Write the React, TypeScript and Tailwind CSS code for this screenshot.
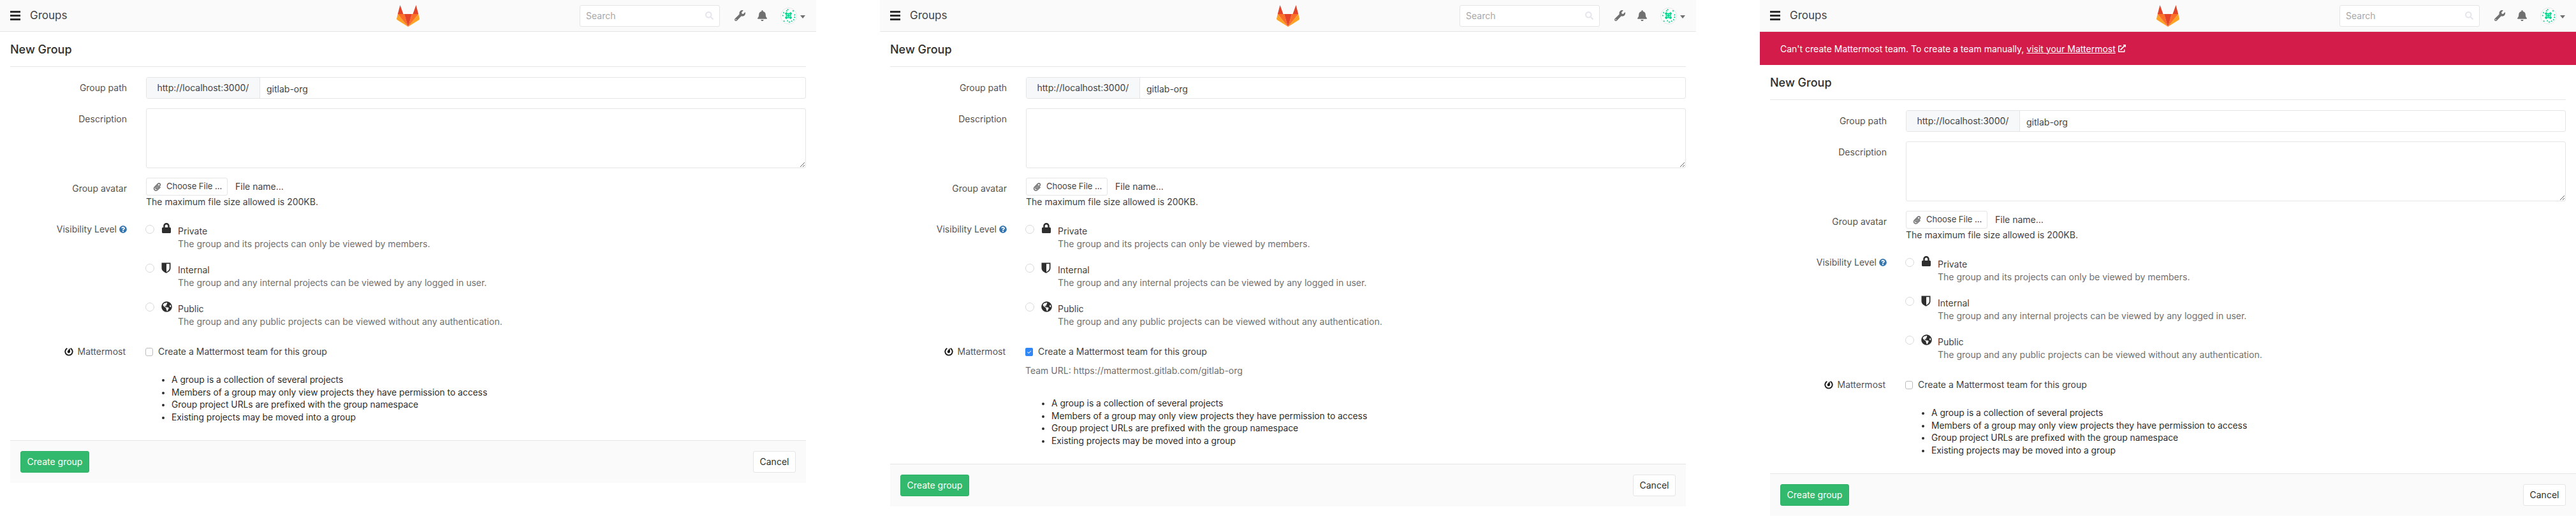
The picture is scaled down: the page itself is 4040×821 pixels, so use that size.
import React from "react";
import { FaBell, FaLock, FaPaperclip, FaQuestionCircle, FaSearch, FaWrench, FaGlobeAmericas, FaExternalLinkAlt } from "react-icons/fa";

function Logo() {
  return (
    <svg width="36" height="34" viewBox="0 0 36 34">
      <polygon points="5.5,0 1.8,14 10.5,14" fill="#e24329" />
      <polygon points="30.5,0 34.2,14 25.5,14" fill="#e24329" />
      <polygon points="1.8,14 0,21.5 0.6,23 18,34" fill="#fca326" />
      <polygon points="34.2,14 36,21.5 35.4,23 18,34" fill="#fca326" />
      <polygon points="1.8,14 12,14 18,34" fill="#fc6d26" />
      <polygon points="34.2,14 24,14 18,34" fill="#fc6d26" />
      <polygon points="12,14 24,14 18,34" fill="#e24329" />
    </svg>
  );
}

function Avatar() {
  const blobs = [
    [9, 9],
    [16, 9],
    [9, 16],
    [16, 16],
  ];
  const dots = [
    [11.5, 2], [20.5, 4], [23, 11], [3, 12], [4.5, 7], [5, 21.5], [14, 23], [21.5, 19], [9.5, 4], [18, 21.5], [11, 21], [23, 15],
  ];
  return (
    <svg width="26" height="26" viewBox="0 0 26 26" className="rounded-full border border-[#e5e5e5] bg-white">
      <rect x="11.5" y="8" width="2" height="9" fill="#00d68f" />
      <rect x="8" y="11.5" width="9" height="2" fill="#00d68f" />
      {blobs.map(([x, y]) => (
        <polygon key={`${x}-${y}`} points={`${x},${y - 2.8} ${x + 2.8},${y} ${x},${y + 2.8} ${x - 2.8},${y}`} fill="#00d68f" />
      ))}
      {dots.map(([x, y]) => (
        <polygon key={`${x}-${y}`} points={`${x - 1.5},${y + 1.3} ${x + 1.5},${y + 1.3} ${x},${y - 1.5}`} fill="#00d68f" />
      ))}
    </svg>
  );
}

function Shield() {
  return (
    <svg width="15" height="17" viewBox="0 0 15 17">
      <path d="M0.5 0.5H14.5V9C14.5 13 10.5 15.5 7.5 16.8C4.5 15.5 0.5 13 0.5 9Z" fill="#2e2e2e" />
      <path d="M8 2.2H12.8V9C12.8 11.6 10.4 13.6 8 14.9Z" fill="#fff" />
    </svg>
  );
}

function MattermostIcon() {
  return (
    <svg width="14" height="14" viewBox="0 0 14 14">
      <path d="M4.4 1.9A5.7 5.7 0 1 0 9.6 1.9" fill="none" stroke="#1a1a1a" strokeWidth="1.9" />
      <path d="M8.5 1.6L9.1 7A2.2 2.2 0 1 1 5.2 5.7Z" fill="#1a1a1a" />
    </svg>
  );
}

function Header() {
  return (
    <header className="h-[50px] bg-[#fafafa] border-b border-[#e5e5e5] flex items-center pl-4 pr-[17px] relative">
      <div className="w-4 flex flex-col gap-[3px]">
        <span className="h-[3px] bg-[#2e2e2e]" />
        <span className="h-[3px] bg-[#2e2e2e]" />
        <span className="h-[3px] bg-[#2e2e2e]" />
      </div>
      <span className="ml-[15px] text-[17px] text-[#444]">Groups</span>
      <div className="absolute left-[622px] top-2">
        <Logo />
      </div>
      <div className="ml-auto flex items-center">
        <div className="w-[220px] h-[34px] bg-white border border-[#e5e5e5] rounded-[3px] flex items-center pl-[9px] pr-[9px]">
          <input
            readOnly
            placeholder="Search"
            className="flex-1 min-w-0 outline-none bg-transparent text-[14px] placeholder:text-[#a8a8a8]"
          />
          <FaSearch className="text-[#e6e6ee] text-[13px]" />
        </div>
        <FaWrench className="ml-[23px] text-[#707070] text-[17px]" />
        <FaBell className="ml-[18px] text-[#707070] text-[17px]" />
        <div className="ml-[20px]">
          <Avatar />
        </div>
        <svg width="8" height="5" viewBox="0 0 8 5" className="ml-[5px] mt-[3px]">
          <polygon points="0,0 8,0 4,5" fill="#707070" />
        </svg>
      </div>
    </header>
  );
}

function Label({ children, className = "" }: { children: React.ReactNode; className?: string }) {
  return (
    <div className={`w-[183px] shrink-0 text-right text-[14px] leading-5 text-[#555] flex justify-end items-center ${className}`}>
      {children}
    </div>
  );
}

function Option({ icon, name, desc }: { icon: React.ReactNode; name: string; desc: string }) {
  return (
    <div className="flex mb-[21px] h-10">
      <span className="w-[14px] h-[14px] ml-[-1px] rounded-full border border-[#d9d9d9] bg-white shrink-0" />
      <span className="w-[26px] ml-[11px] shrink-0 -mt-[2px]">{icon}</span>
      <div className="text-[14px] leading-5">
        <div className="text-[#444]">{name}</div>
        <div className="text-[#707070]">{desc}</div>
      </div>
    </div>
  );
}

const items = [
  "A group is a collection of several projects",
  "Members of a group may only view projects they have permission to access",
  "Group project URLs are prefixed with the group namespace",
  "Existing projects may be moved into a group",
];

function Panel({ banner = false, checked = false }: { banner?: boolean; checked?: boolean }) {
  return (
    <section className="w-[1280px] shrink-0 bg-white">
      <Header />
      {banner && (
        <div className="h-[52px] bg-[#d31c4a] text-white text-[14px] pl-8 flex items-center">
          <span>Can't create Mattermost team. To create a team manually,&nbsp;</span>
          <span className="underline">visit your Mattermost</span>
          <FaExternalLinkAlt className="ml-[4px] text-[12px]" />
        </div>
      )}
      <div className="pl-4">
        <div className="mr-4 h-[55px] border-b border-[#e5e5e5] flex items-center">
          <h1 className="text-[18px] font-medium text-[#2e2e2e]">New Group</h1>
        </div>
        <form className="mr-4 mt-4">
          <div className="flex">
            <Label className="h-[34px]">Group path</Label>
            <div className="ml-[30px] flex-1 flex h-[34px] border border-[#e5e5e5] rounded-[3px]">
              <span className="w-[178px] bg-[#f7f8fa] border-r border-[#e5e5e5] text-center text-[14px] leading-[32px] text-[#444]">
                http://localhost:3000/
              </span>
              <input readOnly defaultValue="gitlab-org" className="flex-1 outline-none pl-[10px] pt-[2px] text-[14px] text-[#444]" />
            </div>
          </div>
          <div className="flex mt-[15px]">
            <Label className="h-[34px]">Description</Label>
            <textarea readOnly className="ml-[30px] flex-1 h-[94px] border border-[#e5e5e5] rounded-[3px] outline-none" />
          </div>
          <div className="flex mt-[15px]">
            <Label className="h-[34px]">Group avatar</Label>
            <div className="ml-[30px]">
              <div className="flex items-center">
                <span className="w-[128px] h-[28px] border border-[#e5e5e5] rounded-[3px] flex items-center pl-[10px] text-[13px] text-[#444]">
                  <FaPaperclip className="text-[#707070] text-[13px] mr-[8px]" />
                  Choose File ...
                </span>
                <span className="ml-3 text-[14px] text-[#444] -mt-[2px]">File name...</span>
              </div>
              <div className="text-[14px] leading-5 text-[#444]">The maximum file size allowed is 200KB.</div>
            </div>
          </div>
          <div className="flex mt-[26px]">
            <Label className="h-[14px]">
              Visibility Level
              <FaQuestionCircle className="ml-[4px] text-[#3777b0] text-[12px]" />
            </Label>
            <div className="ml-[30px]">
              <Option icon={<FaLock className="text-[#2e2e2e] text-[16px] -mt-[1px]" />} name="Private" desc="The group and its projects can only be viewed by members." />
              <Option icon={<Shield />} name="Internal" desc="The group and any internal projects can be viewed by any logged in user." />
              <Option icon={<FaGlobeAmericas className="text-[#2e2e2e] text-[17px]" />} name="Public" desc="The group and any public projects can be viewed without any authentication." />
            </div>
          </div>
          <div className="flex mt-[6px]">
            <Label className="h-5 self-start">
              <MattermostIcon />
              <span className="ml-[7px] mr-[2px]">Mattermost</span>
            </Label>
            <div className="ml-[29px]">
              <div className="flex items-center text-[14px] leading-5 text-[#444]">
                {checked ? (
                  <span className="w-[12px] h-[13px] rounded-[2px] bg-[#2f86f6] flex items-center justify-center text-white text-[9px] leading-none">✓</span>
                ) : (
                  <span className="w-[12px] h-[13px] rounded-[3px] border border-[#bdbdbd] bg-white" />
                )}
                <span className="ml-2">Create a Mattermost team for this group</span>
              </div>
              {checked && (
                <div className="mt-[10px] text-[14px] leading-5 text-[#707070]">Team URL: https://mattermost.gitlab.com/gitlab-org</div>
              )}
            </div>
          </div>
          <ul className={`ml-[253px] list-disc text-[13.8px] leading-[19.7px] text-[#2e2e2e] ${checked ? "mt-[32px]" : "mt-[25px]"}`}>
            {items.map((t) => (
              <li key={t}>{t}</li>
            ))}
          </ul>
        </form>
        <div className={`mt-[25px] h-[67px] bg-[#fafafa] border-t border-[#e5e5e5] pl-4 pr-4 pt-4 flex justify-between items-start ${banner ? "" : "mr-4"}`}>
          <span className="h-[34px] w-[108px] rounded-[3px] bg-[#33b96e] border border-[#2fb268] text-white text-[14px] flex items-center justify-center">Create group</span>
          <span className="h-[34px] w-[67px] rounded-[3px] bg-white border border-[#e5e5e5] text-[#2e2e2e] text-[14px] flex items-center justify-center">Cancel</span>
        </div>
      </div>
    </section>
  );
}

export default function App() {
  return (
    <div className="w-[4040px] min-h-[821px] bg-white flex gap-[100px] font-['Inter',sans-serif] overflow-hidden">
      <Panel />
      <Panel checked />
      <Panel banner />
    </div>
  );
}
